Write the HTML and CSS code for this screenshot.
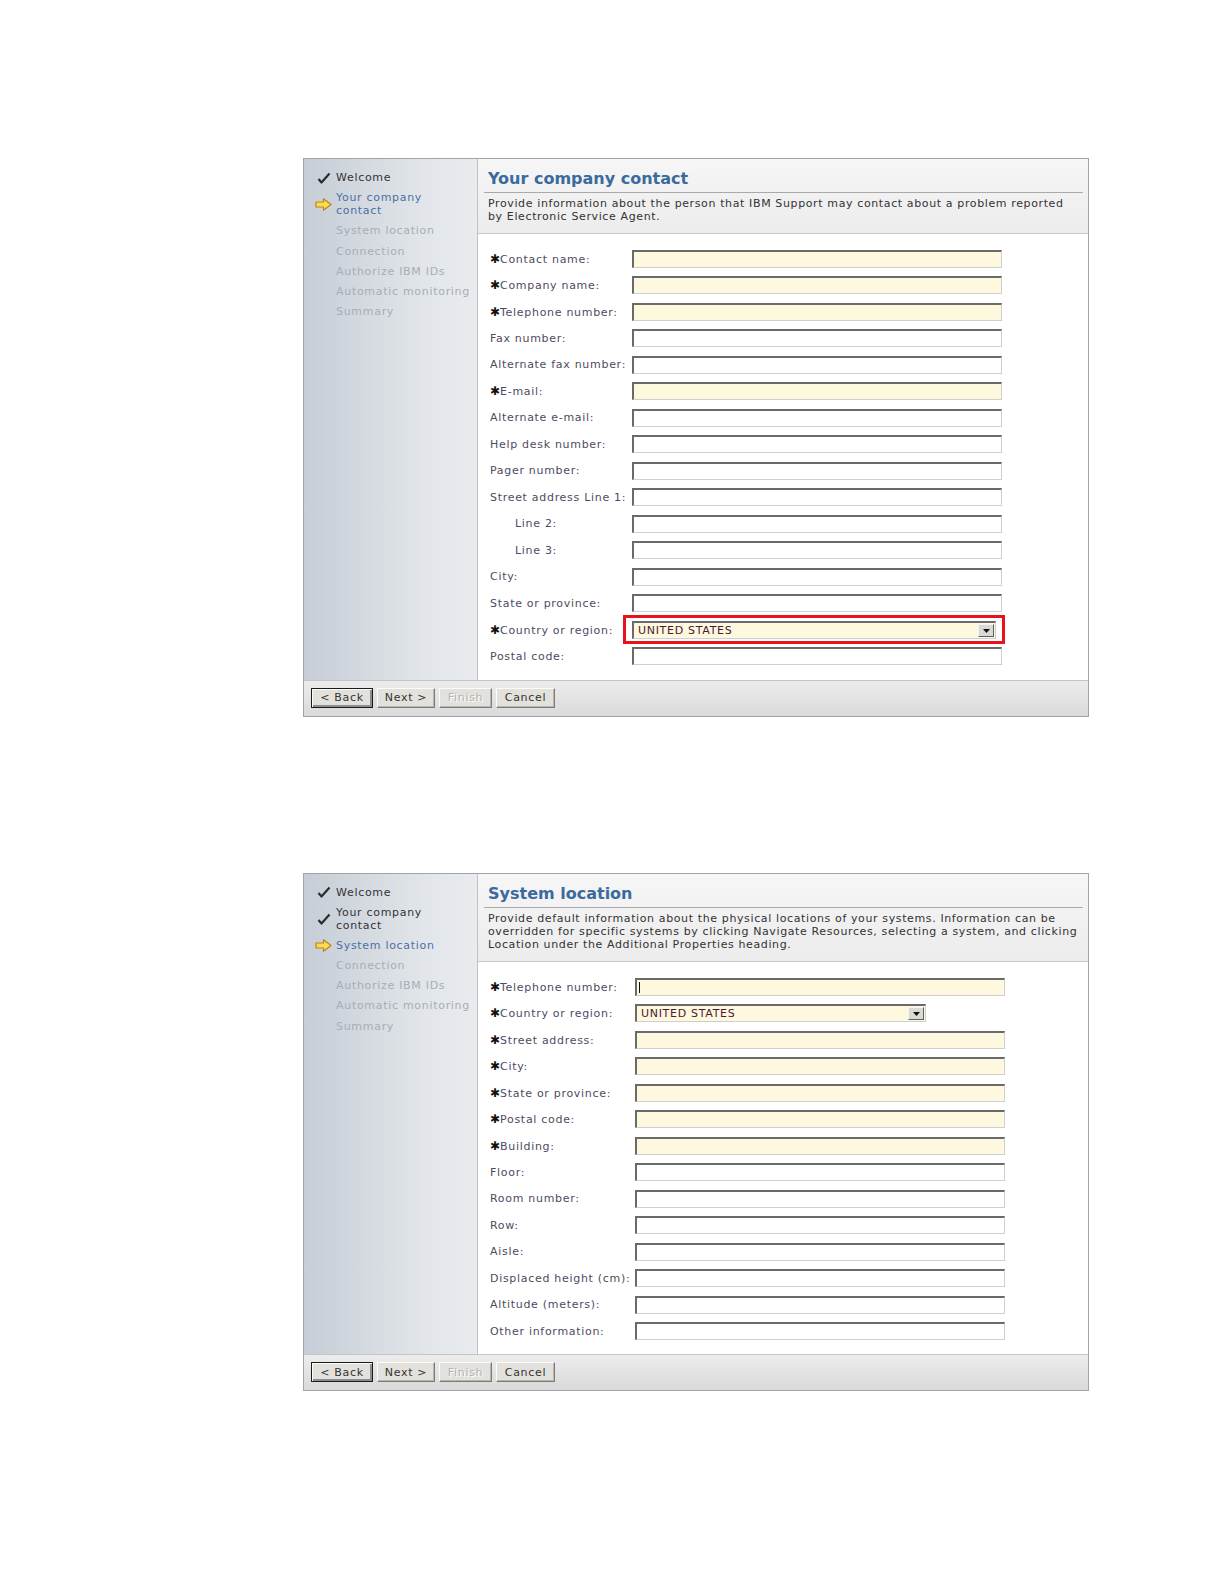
FILE: index.html
```html
<!DOCTYPE html>
<html lang="en">

<head>
    <meta charset="UTF-8">
    <title>Electronic Service Agent setup</title>
    <link rel="stylesheet" href="styles.css">
</head>

<body>
    <div class="page">

        <!-- step 2: company contact -->
        <div class="wizard">
            <div class="wizard-main">
                <ul class="steps">
                    <li class="done"><span class="ico"><svg width="14" height="12" viewBox="0 0 14 12"><path d="M1.5 7 L4.5 10.5 L12.5 1.5" fill="none" stroke="#2d2d2d" stroke-width="2.2" stroke-linejoin="round"/></svg></span><span>Welcome</span></li>
                    <li class="current"><span class="ico"><svg width="17" height="13" viewBox="0 0 17 13"><path d="M1 4 H8.5 V0.8 L16 6.5 L8.5 12.2 V9 H1 Z" fill="#ffd94f" stroke="#b5861e" stroke-width="1.2" stroke-linejoin="round"/></svg></span><span>Your company<br>contact</span></li>
                    <li><span class="ico"></span><span>System location</span></li>
                    <li><span class="ico"></span><span>Connection</span></li>
                    <li><span class="ico"></span><span>Authorize IBM IDs</span></li>
                    <li><span class="ico"></span><span>Automatic monitoring</span></li>
                    <li><span class="ico"></span><span>Summary</span></li>
                </ul>
                <div class="content">
                    <div class="content-head">
                        <h1>Your company contact</h1>
                        <p>Provide information about the person that IBM Support may contact about a problem reported<br>by Electronic Service Agent.</p>
                    </div>
                    <div class="form">
                        <div class="row"><label><span class="star">&#10033;</span>Contact name:</label><input class="field req" type="text"></div>
                        <div class="row"><label><span class="star">&#10033;</span>Company name:</label><input class="field req" type="text"></div>
                        <div class="row"><label><span class="star">&#10033;</span>Telephone number:</label><input class="field req" type="text"></div>
                        <div class="row"><label>Fax number:</label><input class="field" type="text"></div>
                        <div class="row"><label>Alternate fax number:</label><input class="field" type="text"></div>
                        <div class="row"><label><span class="star">&#10033;</span>E-mail:</label><input class="field req" type="text"></div>
                        <div class="row"><label>Alternate e-mail:</label><input class="field" type="text"></div>
                        <div class="row"><label>Help desk number:</label><input class="field" type="text"></div>
                        <div class="row"><label>Pager number:</label><input class="field" type="text"></div>
                        <div class="row"><label>Street address Line 1:</label><input class="field" type="text"></div>
                        <div class="row"><label class="indent">Line 2:</label><input class="field" type="text"></div>
                        <div class="row"><label class="indent">Line 3:</label><input class="field" type="text"></div>
                        <div class="row"><label>City:</label><input class="field" type="text"></div>
                        <div class="row"><label>State or province:</label><input class="field" type="text"></div>
                        <div class="row">
                            <label><span class="star">&#10033;</span>Country or region:</label>
                            <span class="callout">
                                <span class="select wide"><span>UNITED STATES</span><span class="drop"><svg width="7" height="4" viewBox="0 0 7 4"><path d="M0 0 H7 L3.5 4 Z" fill="#111"/></svg></span></span>
                            </span>
                        </div>
                        <div class="row"><label>Postal code:</label><input class="field" type="text"></div>
                    </div>
                </div>
            </div>
            <div class="buttons">
                <button class="btn default" style="width: 62px">&lt; Back</button>
                <button class="btn" style="width: 58px">Next &gt;</button>
                <button class="btn" style="width: 53px" disabled>Finish</button>
                <button class="btn" style="width: 59px">Cancel</button>
            </div>
        </div>

        <!-- step 3: system location -->
        <div class="wizard">
            <div class="wizard-main">
                <ul class="steps">
                    <li class="done"><span class="ico"><svg width="14" height="12" viewBox="0 0 14 12"><path d="M1.5 7 L4.5 10.5 L12.5 1.5" fill="none" stroke="#2d2d2d" stroke-width="2.2" stroke-linejoin="round"/></svg></span><span>Welcome</span></li>
                    <li class="done"><span class="ico"><svg width="14" height="12" viewBox="0 0 14 12"><path d="M1.5 7 L4.5 10.5 L12.5 1.5" fill="none" stroke="#2d2d2d" stroke-width="2.2" stroke-linejoin="round"/></svg></span><span>Your company<br>contact</span></li>
                    <li class="current"><span class="ico"><svg width="17" height="13" viewBox="0 0 17 13"><path d="M1 4 H8.5 V0.8 L16 6.5 L8.5 12.2 V9 H1 Z" fill="#ffd94f" stroke="#b5861e" stroke-width="1.2" stroke-linejoin="round"/></svg></span><span>System location</span></li>
                    <li><span class="ico"></span><span>Connection</span></li>
                    <li><span class="ico"></span><span>Authorize IBM IDs</span></li>
                    <li><span class="ico"></span><span>Automatic monitoring</span></li>
                    <li><span class="ico"></span><span>Summary</span></li>
                </ul>
                <div class="content">
                    <div class="content-head">
                        <h1>System location</h1>
                        <p>Provide default information about the physical locations of your systems. Information can be<br>overridden for specific systems by clicking Navigate Resources, selecting a system, and clicking<br>Location under the Additional Properties heading.</p>
                    </div>
                    <div class="form wide-labels">
                        <div class="row"><label><span class="star">&#10033;</span>Telephone number:</label><input class="field req focus" type="text"></div>
                        <div class="row">
                            <label><span class="star">&#10033;</span>Country or region:</label>
                            <span class="select"><span>UNITED STATES</span><span class="drop"><svg width="7" height="4" viewBox="0 0 7 4"><path d="M0 0 H7 L3.5 4 Z" fill="#111"/></svg></span></span>
                        </div>
                        <div class="row"><label><span class="star">&#10033;</span>Street address:</label><input class="field req" type="text"></div>
                        <div class="row"><label><span class="star">&#10033;</span>City:</label><input class="field req" type="text"></div>
                        <div class="row"><label><span class="star">&#10033;</span>State or province:</label><input class="field req" type="text"></div>
                        <div class="row"><label><span class="star">&#10033;</span>Postal code:</label><input class="field req" type="text"></div>
                        <div class="row"><label><span class="star">&#10033;</span>Building:</label><input class="field req" type="text"></div>
                        <div class="row"><label>Floor:</label><input class="field" type="text"></div>
                        <div class="row"><label>Room number:</label><input class="field" type="text"></div>
                        <div class="row"><label>Row:</label><input class="field" type="text"></div>
                        <div class="row"><label>Aisle:</label><input class="field" type="text"></div>
                        <div class="row"><label>Displaced height (cm):</label><input class="field" type="text"></div>
                        <div class="row"><label>Altitude (meters):</label><input class="field" type="text"></div>
                        <div class="row"><label>Other information:</label><input class="field" type="text"></div>
                    </div>
                </div>
            </div>
            <div class="buttons">
                <button class="btn default" style="width: 62px">&lt; Back</button>
                <button class="btn" style="width: 58px">Next &gt;</button>
                <button class="btn" style="width: 53px" disabled>Finish</button>
                <button class="btn" style="width: 59px">Cancel</button>
            </div>
        </div>

    </div>
</body>

</html>
```

FILE: styles.css
```css
body {
    margin: 0;
    background-color: #fff;
    font-family: "DejaVu Sans", Verdana, sans-serif;
    font-size: 11px;
    letter-spacing: 0.7px;
    color: #333;
}

.page {
    padding: 158px 0 0 303px;
}

.wizard {
    width: 786px;
    box-sizing: border-box;
    border: 1px solid #a4a4a4;
    display: flex;
    flex-direction: column;
}

.wizard + .wizard {
    margin-top: 156px;
}

.wizard-main {
    display: flex;
}

/* left step list */
.steps {
    width: 173px;
    flex: none;
    margin: 0;
    padding: 12px 0 0 0;
    list-style: none;
    border-right: 1px solid #bcc2c9;
    background: linear-gradient(to right, #c6cdd6, #e2e6ea 70%, #e9ebee);
}

.steps li {
    display: flex;
    align-items: center;
    line-height: 13px;
    margin-bottom: 7.2px;
    color: #a7adb5;
}

.steps li.done {
    color: #333;
}

.steps li.current {
    color: #4a70a6;
}

.steps .ico {
    width: 17px;
    height: 13px;
    margin: 0 4px 0 11px;
    flex: none;
    display: flex;
    align-items: center;
    justify-content: center;
}

/* right side */
.content {
    flex: 1;
    min-width: 0;
    display: flex;
    flex-direction: column;
}

.content-head {
    padding: 10px 5px 10px 6px;
    border-bottom: 1px solid #c9c9c9;
    background: linear-gradient(to bottom, #f6f6f6, #ececec);
    overflow: hidden;
}

.content-head h1 {
    margin: 0;
    padding: 0 0 3px 4px;
    font-size: 16px;
    line-height: 20px;
    letter-spacing: 0;
    color: #3b6a9e;
    border-bottom: 1px solid #a9a9a9;
}

.content-head p {
    margin: 4px 0 0 0;
    padding-left: 4px;
    line-height: 13px;
    letter-spacing: 0.62px;
    color: #333;
    white-space: nowrap;
}

.form {
    flex: 1;
    padding: 11.5px 0 10px 12px;
    background-color: #fff;
}

.form.wide-labels {
    padding-top: 12px;
    padding-bottom: 9.5px;
}

.row {
    display: flex;
    align-items: center;
    height: 26.5px;
}

.row label {
    width: 142px;
    flex: none;
    color: #4f4a5f;
    white-space: nowrap;
}

.wide-labels .row label {
    width: 145px;
}

.row label.indent {
    padding-left: 25px;
    box-sizing: border-box;
}

.star {
    color: #111;
    font-size: 12px;
    font-weight: bold;
    letter-spacing: 0;
}

.field {
    width: 370px;
    height: 18px;
    box-sizing: border-box;
    margin: 0;
    padding: 0 3px;
    border-style: solid;
    border-width: 2px 1px 1px 2px;
    border-color: #6a6a6a #cfcfcf #cfcfcf #6a6a6a;
    background-color: #fff;
    font: inherit;
}

.field.req {
    background-color: #fdf8de;
}

.field.focus {
    background: linear-gradient(#111, #111) no-repeat 2px 2px / 1px 11px, #fdf8de;
}

.select {
    width: 291px;
    height: 18px;
    box-sizing: border-box;
    display: flex;
    align-items: center;
    justify-content: space-between;
    padding: 0 1px 0 4px;
    border-style: solid;
    border-width: 2px 1px 1px 2px;
    border-color: #6a6a6a #cfcfcf #cfcfcf #6a6a6a;
    background-color: #fdf8de;
    color: #4a1a33;
}

.select.wide {
    width: 364px;
}

.select .drop {
    width: 16px;
    height: 13px;
    box-sizing: border-box;
    display: flex;
    align-items: center;
    justify-content: center;
    background-color: #d9d9d6;
    border: 1px solid;
    border-color: #f4f4f4 #5e5e5e #5e5e5e #f4f4f4;
}

/* red annotation box around the country field */
.callout {
    display: inline-flex;
    margin-left: -9px;
    padding: 3px 6px 2px 6px;
    border: 3px solid #e8131a;
}

/* bottom button bar */
.buttons {
    height: 36px;
    box-sizing: border-box;
    border-top: 1px solid #c4c4c4;
    background: linear-gradient(to bottom, #ececec, #dadada);
    display: flex;
    align-items: flex-start;
    gap: 4px;
    padding: 7px 0 0 7px;
}

.btn {
    height: 20px;
    padding: 0;
    font-family: "DejaVu Sans", Verdana, sans-serif;
    font-size: 11px;
    letter-spacing: 0.7px;
    color: #333;
    background-color: #e3e1dc;
    border: 1px solid;
    border-color: #fbfbfb #7b7b7b #7b7b7b #fbfbfb;
    box-shadow: inset -1px -1px 0 #b9b6b0;
    cursor: pointer;
}

.btn.default {
    border: 1px solid #1b1b1b;
    box-shadow: inset 1px 1px 0 #fbfbfb, inset -2px -2px 0 #8d8d8d;
}

.btn:disabled {
    color: #b4b4b4;
    text-shadow: 1px 1px 0 #fff;
    cursor: default;
}
```
